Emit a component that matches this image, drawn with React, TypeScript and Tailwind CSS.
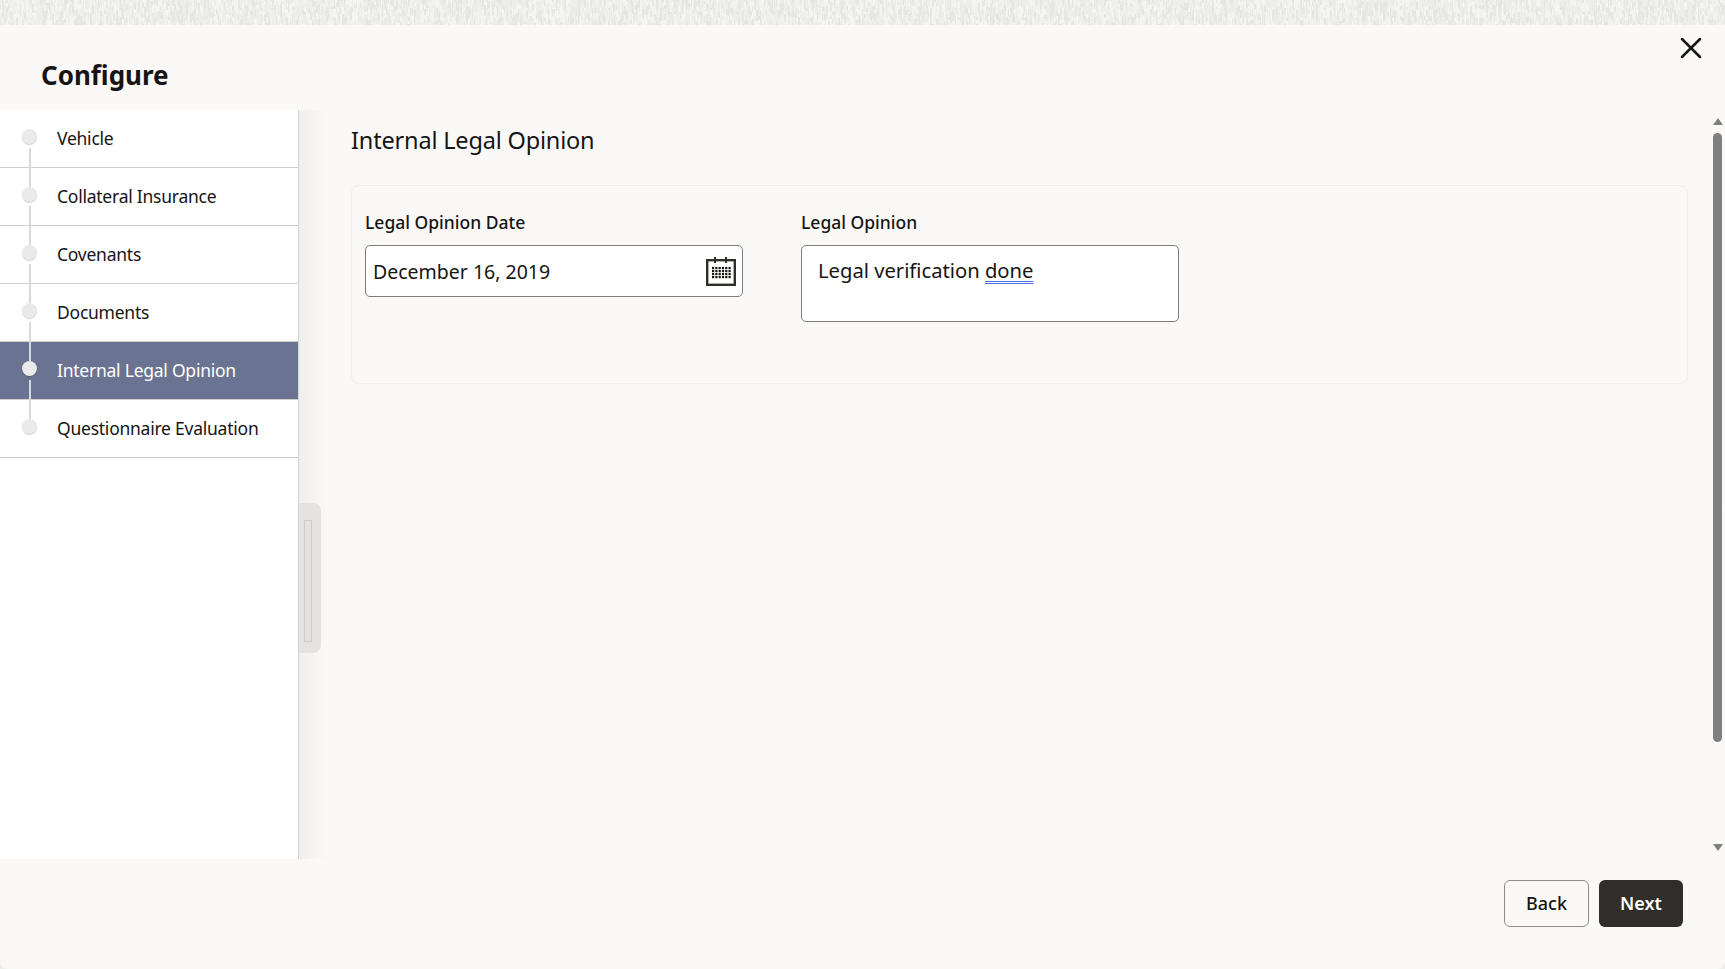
import { X } from 'lucide-react';

const STEPS = [
  'Vehicle',
  'Collateral Insurance',
  'Covenants',
  'Documents',
  'Internal Legal Opinion',
  'Questionnaire Evaluation',
];
const ACTIVE_STEP = 'Internal Legal Opinion';

// Backdrop noise behind the dialog, short pale vertical streaks
function BackdropTexture() {
  const streaks = [];
  let seed = 12345;
  const next = () => {
    seed = Math.imul(seed ^ (seed >>> 15), 2246822519) + 3266489917;
    seed ^= seed >>> 13;
    return (seed >>> 0) / 4294967296;
  };
  for (let x = 0; x < 1725; x += 2) {
    for (let y = -6; y < 25; y += 5) {
      const r = next();
      streaks.push(
        <rect
          key={`${x}-${y}`}
          x={x}
          y={y + Math.floor(next() * 5)}
          width={next() > 0.5 ? 2 : 1}
          height={4 + Math.floor(next() * 8)}
          fill={r < 0.35 ? '#e6e6e5' : r < 0.7 ? '#f4f4f3' : '#ededec'}
        />
      );
    }
  }
  return (
    <svg width="1725" height="25" className="block bg-[#eeeeed]">
      {streaks}
    </svg>
  );
}

function CalendarIcon() {
  const dots = [];
  for (let r = 0; r < 4; r++) {
    for (let c = 0; c < 6; c++) {
      dots.push(<rect key={`${r}-${c}`} x={6 + c * 3.3} y={11 + r * 3} width="2.2" height="2.2" fill="#161513" />);
    }
  }
  return (
    <svg width="30" height="30" viewBox="0 0 30 30" fill="none">
      <rect x="1.2" y="4.2" width="27.6" height="24.6" stroke="#312d2a" strokeWidth="2.4" />
      <rect x="8" y="1" width="2" height="6" fill="#312d2a" />
      <rect x="19" y="1" width="2" height="6" fill="#312d2a" />
      {dots}
    </svg>
  );
}

function StepRow({ label, index }: { label: string; index: number }) {
  const active = label === ACTIVE_STEP;
  return (
    <div
      className={`relative flex h-[58px] items-center border-b border-[#cfcfcf] pl-[57px] text-[17.5px] tracking-[-0.24px] ${
        active ? 'bg-[#6a7391] text-white' : 'text-[#161513]'
      }`}
    >
      {label}
      {/* connector to the next step */}
      {index < STEPS.length - 1 && (
        <span className="absolute top-[38px] left-[29px] z-10 h-[39px] w-[2px] bg-[#d8d9de]" />
      )}
      <span className="absolute top-[19px] left-[22px] z-10 h-[15px] w-[15px] rounded-full bg-[#ebeaea] shadow-[0_1px_1px_rgba(0,0,0,0.18)]" />
    </div>
  );
}

export default function App() {
  return (
    <div className="h-[969px] w-[1725px] overflow-hidden bg-[#eeeeed] font-['Noto_Sans','Open_Sans',sans-serif] text-[#161513]">
      <BackdropTexture />
      <div className="flex h-[944px] flex-col rounded-b-lg bg-[#fbf9f8]">
        {/* Header */}
        <header className="relative h-[85px] shrink-0">
          <h1 className="pt-[32px] pl-[41px] text-[26px] leading-[36px] font-bold">Configure</h1>
          <button className="absolute top-[5px] right-[16px] text-[#161513]">
            <X size={36} strokeWidth={1.7} />
          </button>
        </header>

        <div className="flex h-[749px] shrink-0">
          {/* Steps */}
          <nav className="relative w-[299px] shrink-0 border-r border-[#d3d5da] bg-white">
            {STEPS.map((step, i) => (
              <StepRow key={step} label={step} index={i} />
            ))}
          </nav>

          {/* Content */}
          <main className="relative flex-1 bg-gradient-to-r from-[#efefee] to-[#fbf9f8] to-[28px] pl-[52px]">
            <span className="absolute top-[393px] left-0 flex h-[150px] w-[22px] items-center rounded-r-lg bg-[#e4e3e2] pl-[5px]">
              <span className="mt-[6px] block h-[122px] w-[8px] border border-[#cccccb]" />
            </span>
            <h2 className="pt-[12px] text-[23.5px] leading-[36px] font-normal tracking-[-0.18px]">Internal Legal Opinion</h2>
            <section className="mt-[27px] flex h-[199px] w-[1337px] gap-[58px] rounded-lg border border-[#f1efed] px-[13px] pt-[24px]">
              <div className="w-[378px]">
                <label className="block text-[17.5px] leading-[24px] font-medium">Legal Opinion Date</label>
                <div className="mt-[11px] flex h-[52px] items-center justify-between rounded-[5px] border border-[#7f7d7b] bg-white pr-[6px] pl-[7px] text-[19.5px]">
                  <span className="pt-[1px]">December 16, 2019</span>
                  <CalendarIcon />
                </div>
              </div>
              <div className="w-[378px]">
                <label className="block text-[17.5px] leading-[24px] font-medium">Legal Opinion</label>
                <div className="mt-[11px] h-[77px] rounded-[5px] border border-[#7f7d7b] bg-white pt-[9px] pl-[16px] text-[20.2px] leading-[30px]">
                  Legal verification{' '}
                  <span className="underline decoration-[#4a6fe3] decoration-double decoration-1 underline-offset-3">done</span>
                </div>
              </div>
            </section>

            {/* Scrollbar */}
            <div className="absolute top-[8px] right-[3px] flex h-[733px] w-[9px] flex-col items-center">
              <span className="h-0 w-0 border-x-[5px] border-b-[7px] border-x-transparent border-b-[#7f7f7f]" />
              <span className="mt-[8px] h-[609px] w-[9px] rounded-full bg-[#7f7f7f]" />
              <span className="mt-auto h-0 w-0 border-x-[5px] border-t-[7px] border-x-transparent border-t-[#7f7f7f]" />
            </div>
          </main>
        </div>

        {/* Footer */}
        <footer className="flex flex-1 items-start justify-end gap-[10px] pt-[21px] pr-[42px] text-[18px]">
          <button className="h-[47px] w-[85px] rounded-[6px] border border-[#8f8d8b] font-medium">Back</button>
          <button className="h-[47px] w-[84px] rounded-[6px] bg-[#312d2a] font-semibold text-white">Next</button>
        </footer>
      </div>
    </div>
  );
}
